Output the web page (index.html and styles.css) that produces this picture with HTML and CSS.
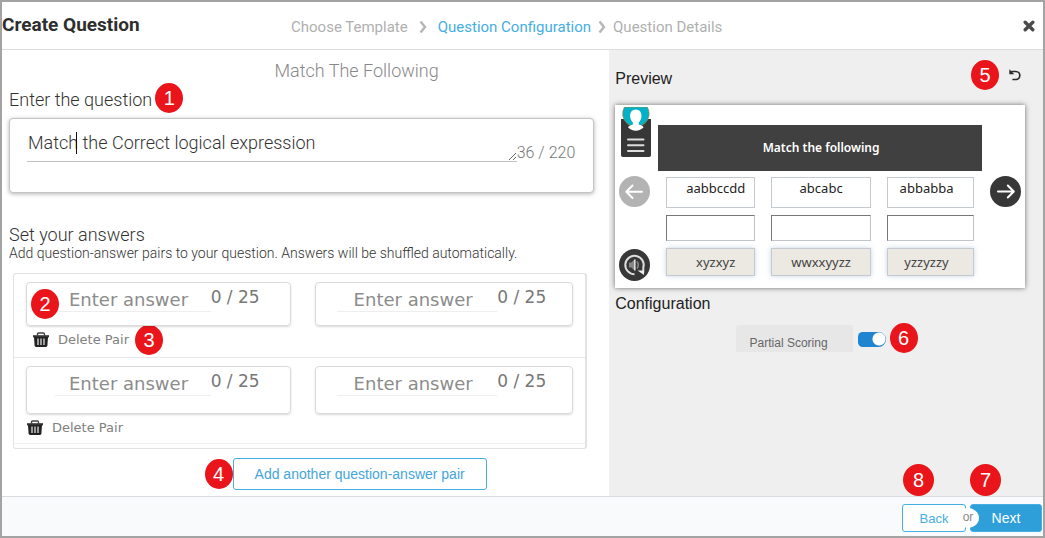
FILE: index.html
```html
<!DOCTYPE html>
<html lang="en">
<head>
<meta charset="utf-8">
<title>Create Question</title>
<link rel="stylesheet" href="styles.css">
</head>
<body>
<div class="dialog">
  <header class="header">
    <h1 class="title">Create Question</h1>
    <nav class="steps" aria-label="Steps">
      <span>Choose Template</span>
      <svg class="chevron" viewBox="0 0 8 14"><path d="M1.5 1.5 6 7l-4.500 5.500"/></svg>
      <span class="current">Question Configuration</span>
      <svg class="chevron" viewBox="0 0 8 14"><path d="M1.500 1.500 6 7l-4.500 5.500"/></svg>
      <span>Question Details</span>
    </nav>
    <button class="icon-button close" type="button" aria-label="Close">
      <svg width="12" height="12" viewBox="0 0 12 12"><path d="M2.200 2.200l7.600 7.600M9.800 2.200 2.200 9.800" stroke="#4a4a4a" stroke-width="3.400" stroke-linecap="round"/></svg>
    </button>
  </header>

  <main class="content">
    <section class="editor">
      <h2 class="template-name">Match The Following</h2>
      <div class="label-row">
        <label for="question">Enter the question</label>
        <span class="badge">1</span>
      </div>
      <div class="question-card">
        <div class="question-field">
          <textarea id="question" rows="1">Match the Correct logical expression</textarea>
          <span class="caret"></span>
        </div>
        <span class="question-count">36 / 220</span>
      </div>

      <h3 class="answers-title">Set your answers</h3>
      <p class="answers-hint">Add question-answer pairs to your question. Answers will be shuffled automatically.</p>

      <div class="pairs">
        <div class="pair">
          <div class="fields">
            <div class="answer"><input type="text" placeholder="Enter answer" aria-label="Question 1"><span class="count">0 / 25</span><span class="badge on-field">2</span></div>
            <div class="answer second"><input type="text" placeholder="Enter answer" aria-label="Answer 1"><span class="count">0 / 25</span></div>
          </div>
          <div class="delete-row">
            <button class="delete" type="button">
              <svg width="18" height="16" viewBox="0 0 18 16"><path d="M5.500 3.500V2.200Q5.500 1 6.700 1h4.600q1.200 0 1.200 1.200v1.300" fill="none" stroke="#444" stroke-width="1.400"/><path d="M1 3.200h16v2.200H1z" fill="#333"/><path d="M2 5h14l-.6 8.600q-.1 1.400-1.500 1.400H4.100q-1.400 0-1.500-1.400z" fill="#222"/><path d="M6 6.500v6.500M9 6.500v6.500M12 6.500v6.500" stroke="#ddd" stroke-width="1.300"/></svg>
              Delete Pair
            </button>
            <span class="badge">3</span>
          </div>
        </div>
        <div class="pair last">
          <div class="fields">
            <div class="answer"><input type="text" placeholder="Enter answer" aria-label="Question 2"><span class="count">0 / 25</span></div>
            <div class="answer second"><input type="text" placeholder="Enter answer" aria-label="Answer 2"><span class="count">0 / 25</span></div>
          </div>
          <div class="delete-row">
            <button class="delete" type="button">
              <svg width="18" height="16" viewBox="0 0 18 16"><path d="M5.500 3.500V2.200Q5.500 1 6.700 1h4.600q1.200 0 1.200 1.200v1.300" fill="none" stroke="#444" stroke-width="1.400"/><path d="M1 3.200h16v2.200H1z" fill="#333"/><path d="M2 5h14l-.6 8.600q-.1 1.400-1.500 1.400H4.100q-1.400 0-1.500-1.400z" fill="#222"/><path d="M6 6.500v6.500M9 6.500v6.500M12 6.500v6.500" stroke="#ddd" stroke-width="1.300"/></svg>
              Delete Pair
            </button>
          </div>
        </div>
      </div>
      <div class="add-row">
        <span class="badge">4</span>
        <button class="add" type="button">Add another question-answer pair</button>
      </div>
    </section>

    <aside class="side">
      <div class="preview-head">
        <h3>Preview</h3>
        <span class="badge">5</span>
        <button class="icon-button" type="button" aria-label="Reload preview">
          <svg width="12" height="12" viewBox="0 0 12 12"><path d="M2.200 2.500h4.600a4 4 0 0 1 0 8H3.400" fill="none" stroke="#2b2b2b" stroke-width="1.700"/><path d="M.3.300v5h5L3.600 3.400z" fill="#2b2b2b"/></svg>
        </button>
      </div>

      <div class="preview">
        <div class="rail">
          <svg width="30" height="50" viewBox="0 0 30 50"><path d="M0 12h30v36q0 2-2 2H2q-2 0-2-2z" fill="#373737"/><path d="M3.500 0h22.800A13.200 13.200 0 1 1 3.500 0z" fill="#00b1c8" stroke="#8a8a45" stroke-width=".8"/><path d="M14.800 2.500c3.700 0 5.700 2.800 5.700 6.300 0 2.900-1.100 5.200-2.800 6.600v2.200c2 .6 4 1.300 4.900 2.700-2 2.300-4.800 3.500-7.800 3.500s-5.800-1.200-7.800-3.500c.9-1.400 2.900-2.100 4.900-2.700v-2.200c-1.700-1.400-2.800-3.700-2.800-6.600 0-3.500 2-6.300 5.700-6.300z" fill="#fff"/><path d="M7 32.500h15.500M7 38.300h15.500M7 44.100h15.500" stroke="#ddd" stroke-width="2" stroke-linecap="round"/></svg>
          <button class="icon-button prev" type="button" aria-label="Previous">
            <svg width="31" height="31" viewBox="0 0 31 31"><circle cx="15.500" cy="15.500" r="15.500" fill="#b3b3b3"/><path d="M23 15.800H8M13.500 9.500 7.300 15.800l6.200 6.200" fill="none" stroke="#fff" stroke-width="2"  stroke-linecap="round" stroke-linejoin="round"/></svg>
          </button>
          <button class="icon-button replay" type="button" aria-label="Replay audio">
            <svg width="31" height="32" viewBox="0 0 31 32"><ellipse cx="15.500" cy="16" rx="15.500" ry="16" fill="#373737"/><path d="M15.500 25.200a9.200 9.200 0 1 1 8.800-6.500v5" fill="none" stroke="#ddd" stroke-width="2"/><path d="M18.500 21.500h6.500v4.500z" fill="#eee"/><path d="M10 13.500h2.300l3.200-3v11l-3.200-3H10z" fill="#888"/><path d="M15.800 10.500v11" stroke="#ddd" stroke-width="1.600"/><path d="M18 12.500q2.500 3.500 0 7" fill="none" stroke="#888" stroke-width="1.600"/></svg>
          </button>
        </div>
        <div class="board">
          <div class="board-title">Match the following</div>
          <div class="cells">
            <div class="cell prompt first">aabbccdd</div><div class="cell prompt">abcabc</div><div class="cell prompt third">abbabba</div>
            <div class="cell slot"></div><div class="cell slot"></div><div class="cell slot"></div>
            <div class="cell option first">xyzxyz</div><div class="cell option">wwxxyyzz</div><div class="cell option third">yzzyzzy</div>
          </div>
        </div>
        <div class="rail right">
          <button class="icon-button" type="button" aria-label="Next screen">
            <svg width="31" height="31" viewBox="0 0 31 31"><circle cx="15.500" cy="15.500" r="15.500" fill="#373737"/><path d="M8 15.500h15.500M17.800 9.500l6 6-6 6" fill="none" stroke="#fff" stroke-width="2" stroke-linecap="round" stroke-linejoin="round"/></svg>
          </button>
        </div>
      </div>

      <h3 class="config-title">Configuration</h3>
      <div class="scoring">
        <label for="partial" class="scoring-label">Partial Scoring</label>
        <input id="partial" class="toggle" type="checkbox" role="switch" checked>
        <span class="badge">6</span>
      </div>
      <div class="footer-badges">
        <span class="badge large">8</span>
        <span class="badge large">7</span>
      </div>
    </aside>
  </main>

  <footer class="footer">
    <button class="back" type="button">Back</button>
    <span class="or">or</span>
    <button class="next" type="button">Next</button>
  </footer>
</div>
</body>
</html>
```
FILE: styles.css
```css
* { box-sizing: border-box; }
body { margin: 0; font-family: "Liberation Sans", Arial, sans-serif; color: #444; background: #fff; }
h1, h2, h3, p { margin: 0; font-weight: 400; }
button, input, textarea { font-family: inherit; margin: 0; }
button { cursor: pointer; }
svg { display: block; flex: none; }

.dialog { min-height: 100vh; display: flex; flex-direction: column; border: 2px solid #a3a3a3; }

.header { display: grid; grid-template-columns: 289px 1fr auto; align-items: center; height: 48px; border-bottom: 1px solid #dcdcdc; padding-right: 8px; }
.title { font-family: Roboto, "Liberation Sans", sans-serif; font-size: 19px; line-height: 24px; font-weight: 700; color: #2e2e2e; padding-bottom: 2px; white-space: nowrap; }
.steps { display: flex; align-items: center; font-family: Roboto, "Liberation Sans", sans-serif; font-size: 15px; line-height: 24px; padding-top: 2px; color: #b0b0b0; white-space: nowrap; }
.steps .current { color: #45aee3; }
.chevron { width: 8px; height: 14px; margin: 0 11px; fill: none; stroke: #b5b5b5; stroke-width: 2.4; }
.current + .chevron { margin: 0 7px; }
.icon-button { border: 0; padding: 0; background: none; }

.content { flex: 1; display: grid; grid-template-columns: minmax(0, 7fr) minmax(0, 5fr); }
.editor { padding: 9px 15px 6px 7px; font-family: Roboto, "Liberation Sans", sans-serif; font-weight: 300; }
.template-name { font-size: 18px; line-height: 24px; font-weight: 300; text-align: center; color: #888; padding-left: 110px; }
.label-row { display: flex; align-items: center; gap: 3px; height: 30px; font-size: 18px; color: #333; }
.label-row label { padding-top: 3px; }
.badge { display: flex; align-items: center; justify-content: center; flex: none; width: 28px; height: 30px; border-radius: 50%; background: #e9151b; color: #fff; font-family: "Liberation Sans", Arial, sans-serif; font-size: 20px; font-weight: 400; line-height: 24px; }
.badge.large { width: 31px; height: 32px; }

.question-card { display: flex; align-items: flex-start; height: 75px; margin-top: 5px; padding: 12px 18px 0 17px; border: 1px solid #c4c4c4; border-radius: 4px; box-shadow: 0 1px 4px rgba(0,0,0,.3); background: #fff; }
.question-field { position: relative; flex: 1; }
textarea { display: block; width: 100%; height: 31px; padding: 2px 1px; border: 0; border-bottom: 1px solid #c4c0c0; background: none; font-size: 18px; font-weight: 300; line-height: 20px; color: #333; resize: vertical; outline: 0; overflow: hidden; }
.caret { position: absolute; left: 49px; top: 1px; width: 1px; height: 22px; background: #111; }
.question-count { padding-top: 12px; font-size: 16px; line-height: 20px; color: #777; }

.answers-title { margin-top: 32px; font-size: 18px; line-height: 20px; font-weight: 300; color: #333; }
.answers-hint { font-size: 14px; line-height: 16px; font-weight: 300; color: #333; white-space: nowrap; }

.pairs { margin: 12px 7px 0 4px; padding-bottom: 4px; border: 1px solid #e2e2e2; border-right-width: 2px; border-radius: 3px; }
.pair { padding: 8px 12px 4px; }
.pair + .pair { border-top: 1px solid #e8e8e8; }
.pair.last { padding-bottom: 2px; border-bottom: 1px solid #f0f0f0; }
.fields { display: grid; grid-template-columns: minmax(0, 265fr) minmax(0, 259fr); gap: 24px; }
.answer { position: relative; display: flex; align-items: flex-start; height: 44px; padding: 4px 30px 0 28px; border: 1px solid #dadada; border-radius: 4px; box-shadow: 0 1px 2px rgba(0,0,0,.15); }
.answer.second { padding: 4px 26px 0 21px; }
.answer input { flex: 1; min-width: 0; height: 25px; padding: 0 0 0 14px; border: 0; border-bottom: 1px solid #eee; background: none; outline: 0; font-family: "DejaVu Sans", sans-serif; font-size: 18px; color: #777; }
.answer.second input { padding-left: 17px; }
.answer input::placeholder { color: #8c8c8c; opacity: 1; }
.count { flex: none; font-family: "DejaVu Sans", sans-serif; font-size: 17px; font-weight: 400; line-height: 20px; color: #777; }
.badge.on-field { position: absolute; left: 4px; top: 6px; }
.delete-row { display: flex; align-items: center; gap: 6px; padding-left: 6px; height: 27px; }
.delete { display: flex; align-items: center; gap: 8px; border: 0; padding: 0; background: none; font-family: "DejaVu Sans", sans-serif; font-size: 13px; line-height: 16px; color: #808080; }
.pair.last .answer { height: 48px; }
.pair.last .delete-row { padding-left: 0; }

.add-row { display: flex; align-items: center; justify-content: center; padding: 9px 0 0 88px; }
.add { height: 32px; padding: 0 21px; border: 1px solid #45aee3; border-radius: 3px; background: #fff; color: #45a5dc; font-family: "Liberation Sans", Arial, sans-serif; font-size: 14px; white-space: nowrap; }

.side { display: flex; flex-direction: column; padding: 9px 18px 0 6px; background: #efefef; }
.preview-head { display: flex; align-items: center; height: 32px; padding-right: 4px; gap: 10px; }
.side h3 { font-size: 16px; line-height: 20px; color: #222; }
.preview-head h3 { flex: 1; padding-top: 8px; }
.preview { display: grid; grid-template-columns: 43px minmax(0, 1fr) 43px; margin-top: 14px; min-height: 183px; background: #fff; box-shadow: 0 0 5px rgba(0,0,0,.55); }
.rail { display: flex; flex-direction: column; align-items: flex-start; padding: 2px 0 7px 4px; }
.rail svg:first-child { margin-left: 2px; }
.rail .icon-button svg { margin-left: 0; }
.prev { margin-top: 19px; }
.replay { margin-top: auto; }
.rail.right { padding: 71px 0 0 8px; }
.board { padding-top: 20px; }
.board-title { display: flex; align-items: center; justify-content: center; height: 46px; padding-left: 2px; background: #404040; color: #fff; font: 600 12px/18px "Noto Sans", sans-serif; }
.cells { display: grid; grid-template-columns: minmax(0, 89fr) minmax(0, 100fr) minmax(0, 87fr); grid-template-rows: 31px 26px 28px; gap: 7px 16px; padding: 6px 8px 0; font: 13px/18px "Noto Sans", sans-serif; color: #222; text-align: center; }
.cell { border: 1px solid #c5c9d0; }
.prompt { padding-top: 1px; }
.slot { border-color: #76777a #c0c4ca #c0c4ca #76777a; }
.option { padding-top: 4px; background: #ece9e2; box-shadow: 0 0 5px rgba(120,150,190,.4); color: #444; }
.cell.first { padding-left: 10px; }
.cell.third { padding-right: 8px; }
.side .config-title { margin-top: 6px; }
.scoring { display: flex; align-items: center; justify-content: center; padding: 9px 0 0 13px; }
.scoring-label { padding: 9px 25px 0 14px; height: 27px; background: #e7e7e7; border-radius: 3px 3px 0 0; font-size: 12px; line-height: 18px; color: #666; white-space: nowrap; }
.toggle { appearance: none; width: 28px; height: 15px; margin: 3px 4px 0 5px; border-radius: 5px 8px 8px 5px; background: radial-gradient(circle at 21px 7px, #fff 0 6px, #1f85d0 7px); }
.footer-badges { display: flex; justify-content: flex-end; gap: 36px; margin-top: auto; padding-right: 24px; }

.footer { display: flex; align-items: flex-end; justify-content: flex-end; height: 40px; padding: 0 1px 4px; background: #f8fafc; border-top: 1px solid #d9dbde; }
.back, .next { height: 28px; border: 1px solid #45aee3; border-radius: 3px; font-size: 13px; }
.back { width: 64px; background: #fff; color: #45aee3; }
.next { width: 72px; background: #2f9fd9; color: #fff; font-size: 14px; font-weight: 400; }
.or { position: relative; z-index: 1; width: 22px; height: 20px; margin: 0 -9px 4px; border-radius: 50%; background: #fff; color: #888; font-size: 12px; line-height: 18px; text-align: center; }
```
